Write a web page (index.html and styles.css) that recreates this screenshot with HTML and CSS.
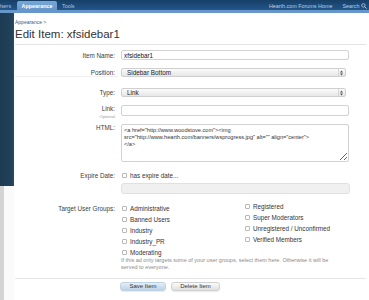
FILE: index.html
```html
<!DOCTYPE html>
<html lang="en">
<head>
<meta charset="utf-8">
<title>Edit Item: xfsidebar1</title>
<link rel="stylesheet" href="styles.css">
</head>
<body>
<header class="topbar">
  <nav class="tabs">
    <span class="tab tab-cut">Users</span>
    <span class="tab tab-active">Appearance</span>
    <span class="tab">Tools</span>
  </nav>
  <div class="links">
    <span>Hearth.com Forums Home</span>
    <span class="search">Search
      <svg class="search-icon" width="6" height="6" viewBox="0 0 6 6"><circle cx="2.4" cy="2.4" r="1.7" fill="none" stroke="#b9cfe4" stroke-width="0.8"/><path d="M3.6 3.6 L5.6 5.6" stroke="#b9cfe4" stroke-width="0.9"/></svg>
    </span>
  </div>
</header>
<div class="strip"></div>
<div class="page">
  <aside class="sidebar"><div class="sidebar-block"></div></aside>
  <main class="content">
    <div class="crumb">Appearance &gt;</div>
    <h1 class="title">Edit Item: xfsidebar1</h1>
    <form class="form">
      <div class="row r-name">
        <label class="lbl">Item Name:</label>
        <input class="text" type="text" value="xfsidebar1">
      </div>
      <div class="row r-position">
        <label class="lbl lbl-line">Position:</label>
        <div class="select"><span>Sidebar Bottom</span><span class="arrows"><svg width="3" height="6" viewBox="0 0 3 6"><path d="M0 2.4 L1.5 0.6 L3 2.4 Z M0 3.6 L1.5 5.4 L3 3.6 Z" fill="#555"/></svg></span></div>
      </div>
      <div class="row r-type">
        <label class="lbl">Type:</label>
        <div class="select"><span>Link</span><span class="arrows"><svg width="3" height="6" viewBox="0 0 3 6"><path d="M0 2.4 L1.5 0.6 L3 2.4 Z M0 3.6 L1.5 5.4 L3 3.6 Z" fill="#555"/></svg></span></div>
      </div>
      <div class="row r-link">
        <div class="lbl lbl-top">
          <label>Link:</label>
          <span class="optional">Optional</span>
        </div>
        <input class="text text-tall" type="text" value="">
      </div>
      <div class="row r-html">
        <label class="lbl lbl-top">HTML:</label>
        <textarea class="area">&lt;a href="http://www.woodstove.com"&gt;&lt;img src="http://www.hearth.com/banners/wsprogress.jpg" alt="" align="center"&gt;
&lt;/a&gt;</textarea>
      </div>
      <div class="row r-expire">
        <label class="lbl">Expire Date:</label>
        <label class="check"><input type="checkbox" class="box"><span>has expire date...</span></label>
      </div>
      <div class="row r-date">
        <span></span>
        <input class="text text-tall text-disabled" type="text" disabled>
      </div>
      <div class="row r-groups">
        <label class="lbl lbl-top lbl-group">Target User Groups:</label>
        <div class="groups">
          <div class="col">
            <label class="check check-g"><input type="checkbox" class="box"><span>Administrative</span></label>
            <label class="check check-g"><input type="checkbox" class="box"><span>Banned Users</span></label>
            <label class="check check-g"><input type="checkbox" class="box"><span>Industry</span></label>
            <label class="check check-g"><input type="checkbox" class="box"><span>Industry_PR</span></label>
            <label class="check check-g"><input type="checkbox" class="box"><span>Moderating</span></label>
          </div>
          <div class="col col-2">
            <label class="check check-g"><input type="checkbox" class="box"><span>Registered</span></label>
            <label class="check check-g"><input type="checkbox" class="box"><span>Super Moderators</span></label>
            <label class="check check-g"><input type="checkbox" class="box"><span>Unregistered / Unconfirmed</span></label>
            <label class="check check-g"><input type="checkbox" class="box"><span>Verified Members</span></label>
          </div>
        </div>
      </div>
      <div class="row r-help">
        <span></span>
        <p class="help">If this ad only targets some of your user groups, select them here. Otherwise it will be served to everyone.</p>
      </div>
      <div class="actions">
        <span></span>
        <div class="buttons">
          <button type="button" class="btn btn-primary">Save Item</button>
          <button type="button" class="btn">Delete Item</button>
        </div>
      </div>
    </form>
  </main>
</div>
</body>
</html>
```

FILE: styles.css
```css
* { box-sizing: border-box; }

html, body {
  margin: 0;
  padding: 0;
  width: 369px;
  height: 300px;
  overflow: hidden;
  background: #fff;
  font-family: "Liberation Sans", Arial, sans-serif;
  color: #3a3a3a;
}

/* ---------- top navigation ---------- */
.topbar {
  height: 10px;
  display: flex;
  justify-content: space-between;
  align-items: stretch;
  background: linear-gradient(#173f66, #22558a);
  font-size: 5.4px;
  color: #a9c3de;
  overflow: hidden;
}

.tabs {
  display: flex;
  align-items: stretch;
}

.tab {
  display: flex;
  align-items: center;
  padding-top: 1px;
  line-height: 6px;
}

.tab-cut {
  margin-left: -3px;
  padding-right: 6px;
}

.tab-active {
  margin-top: 1px;
  padding: 0 4.5px;
  background: linear-gradient(#77a7d6, #6797ca);
  border-radius: 2px 2px 0 0;
  color: #fff;
  font-weight: bold;
}

.tab-active + .tab {
  margin-left: 5px;
}

.links {
  display: flex;
  align-items: center;
  gap: 10px;
  padding-top: 1px;
  padding-right: 2px;
  color: #b9cfe4;
}

.search {
  display: flex;
  align-items: center;
  gap: 1.5px;
}

.search-icon { display: block; }

.strip {
  height: 3px;
  background: #6797ca;
}

/* ---------- page ---------- */
.page {
  display: flex;
  height: 287px;
}

.sidebar {
  width: 14px;
  flex: none;
  background: linear-gradient(to right, #d4d4d4 4px, #fafafa 4px);
}

.sidebar-block {
  height: 173px;
  background: linear-gradient(to right, #1d3b52 0, #21425b 12px, #2b4d66 14px);
}

.content {
  flex: 1;
  padding: 0 3px 0 1px;
}

.crumb {
  margin-top: 6px;
  font-size: 5px;
  line-height: 6px;
  color: #2d5f8e;
}

.title {
  margin: 3px 0 0;
  padding-bottom: 3px;
  border-bottom: 1px solid #e4e4e4;
  font-size: 11.5px;
  line-height: 13px;
  font-weight: normal;
  color: #333;
}

/* ---------- form ---------- */
.form { margin: 0; }

.row {
  display: grid;
  grid-template-columns: 100px 229px;
  column-gap: 6px;
  align-items: center;
}

.lbl {
  text-align: right;
  font-size: 6.3px;
  line-height: 7px;
  color: #3c3c3c;
}

.lbl-top { align-self: start; }

.lbl-line {
  align-self: stretch;
  display: flex;
  align-items: center;
  justify-content: flex-end;
  border-bottom: 1px solid #efefef;
  margin-right: -3px;
  padding-right: 3px;
}

.r-name { margin-top: 5px; }
.r-position { margin-top: 8px; }
.r-type { margin-top: 11px; }
.r-link { margin-top: 6px; }
.r-html { margin-top: 5.5px; }
.r-expire { margin-top: 9.5px; }
.r-date { margin-top: 4.5px; }
.r-groups { margin-top: 8.5px; align-items: start; }
.r-help { margin-top: -1px; }

.text {
  display: block;
  width: 228px;
  height: 10px;
  margin: 0;
  padding: 0 2px;
  border: 1px solid #d2d2d2;
  border-radius: 2px;
  background: #fff;
  font-family: inherit;
  font-size: 6.3px;
  color: #111;
  outline: none;
}

.text-tall { height: 11px; }

.text-disabled {
  width: 229px;
  background: #f0f0f0;
  border-color: #e0e0e0;
  border-radius: 3px;
}

.select {
  width: 225px;
  height: 9px;
  display: flex;
  align-items: center;
  justify-content: space-between;
  padding-left: 5px;
  border: 1px solid #cfcfcf;
  border-radius: 2px;
  background: linear-gradient(#fbfbfb, #e6e6e6);
  font-size: 6.4px;
  color: #222;
}

.arrows {
  width: 6px;
  height: 100%;
  display: flex;
  align-items: center;
  justify-content: center;
  border-left: 1px solid #d6d6d6;
  margin-right: 1px;
}

.arrows svg { display: block; }

.lbl-top label { display: block; }

.r-link .lbl-top { padding-top: 1.5px; }

.optional {
  display: block;
  margin-top: 2px;
  font-size: 4.2px;
  line-height: 5px;
  color: #a0a0a0;
}

.area {
  display: block;
  width: 228px;
  height: 38px;
  margin: 0;
  padding: 2px 2px;
  border: 1px solid #d2d2d2;
  border-radius: 2px;
  font-family: inherit;
  font-size: 5.6px;
  line-height: 7px;
  color: #333;
  resize: vertical;
  overflow: hidden;
  outline: none;
}

.check {
  display: flex;
  align-items: center;
  gap: 3px;
  padding-left: 1px;
  font-size: 6.3px;
  line-height: 7px;
  color: #333;
}

.box {
  appearance: none;
  -webkit-appearance: none;
  width: 5px;
  height: 5px;
  margin: 0;
  border: 1px solid #b8b8b8;
  border-radius: 1px;
  background: #fff;
  flex: none;
}

.lbl-group { line-height: 11px; }

.groups {
  display: grid;
  grid-template-columns: 123px auto;
}

.check-g { line-height: 11px; }

.col-2 { margin-top: -2px; }

.help {
  margin: 0;
  max-width: 222px;
  font-size: 5.5px;
  line-height: 7px;
  color: #8a8a8a;
}

.actions {
  display: grid;
  grid-template-columns: 100px auto;
  column-gap: 5px;
  margin-top: 7.5px;
  padding-top: 3px;
  border-top: 1px solid #e6e6e6;
}

.buttons {
  display: flex;
  gap: 5px;
}

.btn {
  height: 9px;
  padding: 0;
  border: 1px solid #d0d0d0;
  border-radius: 3px;
  background: linear-gradient(#fafafa, #e0e0e0);
  font-family: inherit;
  font-size: 6px;
  line-height: 7px;
  color: #333;
  width: 49px;
  box-shadow: 0 1px 1px rgba(0, 0, 0, 0.08);
}

.btn-primary {
  width: 46px;
  border-color: #bfd2e2;
  background: linear-gradient(#e3eef7, #bcd3e6);
}
```
